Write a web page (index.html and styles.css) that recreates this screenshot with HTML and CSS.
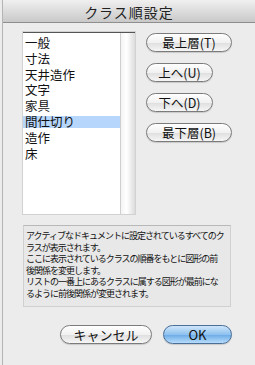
FILE: index.html
```
<!DOCTYPE html>
<html lang="ja">
<head>
    <meta charset="UTF-8">
    <title>クラス順設定</title>
    <link rel="stylesheet" href="styles.css">
</head>
<body>

<div class="window">
    <div class="titlebar">クラス順設定</div>

    <div class="content">
        <div class="top">
            <div class="listbox">
                <ul class="list">
                    <li>一般</li>
                    <li>寸法</li>
                    <li>天井造作</li>
                    <li>文字</li>
                    <li>家具</li>
                    <li class="selected">間仕切り</li>
                    <li>造作</li>
                    <li>床</li>
                </ul>
                <div class="scrollbar"></div>
            </div>

            <div class="actions">
                <button class="pill wide">最上層(T)</button>
                <button class="pill">上へ(U)</button>
                <button class="pill">下へ(D)</button>
                <button class="pill wide">最下層(B)</button>
            </div>
        </div>

        <div class="desc">
            アクティブなドキュメントに設定されているすべてのク<br>
            ラスが表示されます。<br>
            ここに表示されているクラスの順番をもとに図形の前<br>
            後関係を変更します。<br>
            リストの一番上にあるクラスに属する図形が最前にな<br>
            るように前後関係が変更されます。
        </div>

        <div class="footer">
            <button class="pill cancel">キャンセル</button>
            <button class="pill ok">OK</button>
        </div>
    </div>
</div>

</body>
</html>
```

FILE: styles.css
```
body {
    margin: 0;
    background: #ececec;
    font-family: "Noto Sans CJK JP", "Liberation Sans", sans-serif;
    color: #111;
}

.window {
    width: 253px;
    height: 365px;
    box-sizing: border-box;
    border-left: 1px solid #b4b4b4;
    margin-left: 2px;
    background: #ececec;
}

/* Title bar */
.titlebar {
    height: 23px;
    line-height: 25px;
    text-align: center;
    font-size: 14px;
    letter-spacing: 1px;
    color: #222;
    background: linear-gradient(#f0f0f0, #c9c9c9);
    border-bottom: 1px solid #8e8e8e;
    box-sizing: border-box;
}

.content {
    padding: 9px 0 0 20px;
}

.top {
    display: flex;
}

/* Class list */
.listbox {
    display: flex;
    height: 181px;
    border-top: 1px solid #555;
    box-shadow: 0 0 0 1px #d2d2d2;
}

.list {
    list-style: none;
    margin: 0;
    padding: 2px 0 0;
    width: 97px;
    background: #fff;
    font-size: 12.5px;
    line-height: 15.8px;
}

.list li {
    padding-left: 2px;
}

.list li.selected {
    background: linear-gradient(transparent 2px, #b7d6fb 2px, #b7d6fb 14.5px, transparent 14.5px);
}

.scrollbar {
    width: 15px;
    background: linear-gradient(to right, #f4f4f4, #ffffff 40%, #dcdcdc);
    border-left: 1px solid #cfcfcf;
    box-sizing: border-box;
}

/* Buttons */
.actions {
    display: flex;
    flex-direction: column;
    align-items: flex-start;
    gap: 11px;
    margin-left: 11px;
    margin-top: 1px;
}

.pill {
    height: 19px;
    padding: 0;
    border: 1px solid #7b7b7b;
    border-radius: 10px;
    background: linear-gradient(#ffffff, #f1f1f1 50%, #dedede 51%, #f6f6f6);
    font-family: "Noto Sans CJK JP", "Liberation Sans", sans-serif;
    font-size: 12.5px;
    line-height: 17px;
    color: #111;
    box-shadow: 0 1px 1px rgba(0, 0, 0, 0.15);
}

.actions .pill {
    width: 67px;
}

.actions .pill.wide {
    width: 86px;
}

/* Description */
.desc {
    width: 208px;
    margin-top: 11px;
    padding: 4px 3px 6px 2px;
    box-sizing: border-box;
    background: #e8e8e8;
    border: 1px solid #d0d0d0;
    border-top-color: #b8b8b8;
    font-size: 9px;
    letter-spacing: -1px;
    line-height: 11.6px;
    white-space: nowrap;
    color: #111;
}

/* Footer */
.footer {
    display: flex;
    gap: 11px;
    margin-top: 18px;
    margin-left: 37px;
}

.footer .cancel {
    width: 92px;
    font-size: 13px;
}

.footer .ok {
    width: 69px;
    font-size: 13px;
    border-color: #4b6f98;
    background: linear-gradient(#cfe6fb, #8ec1ef 50%, #6aaae6 51%, #b6dcfb);
}
```
